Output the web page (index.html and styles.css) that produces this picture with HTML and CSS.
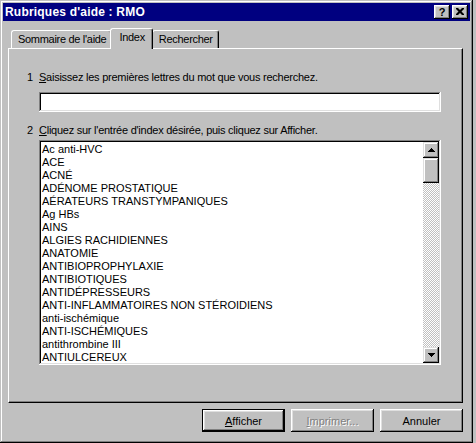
FILE: index.html
```html
<!DOCTYPE html>
<html lang="fr">
<head>
    <meta charset="UTF-8">
    <title>Rubriques d'aide : RMO</title>
    <link rel="stylesheet" href="styles.css">
</head>
<body>
    <div class="window">
        <div class="titlebar">
            <span class="title">Rubriques d'aide : RMO</span>
            <div class="caption-buttons">
                <button class="cap cap-help">?</button>
                <button class="cap">
                    <svg width="8" height="7" viewBox="0 0 8 7"><path d="M0 0h2l2 2 2-2h2v1l-2.5 2.5L8 6v1H6L4 5 2 7H0V6l2.5-2.5L0 1z" fill="#000"/></svg>
                </button>
            </div>
        </div>

        <div class="content">
            <div class="tabs">
                <div class="tab">Sommaire de l'aide</div>
                <div class="tab active">Index</div>
                <div class="tab">Rechercher</div>
            </div>

            <div class="panel">
                <div class="step"><span class="num">1</span><span><u>S</u>aisissez les premières lettres du mot que vous recherchez.</span></div>
                <div class="field"><input type="text" class="search"></div>

                <div class="step step-2"><span class="num">2</span><span><u>C</u>liquez sur l'entrée d'index désirée, puis cliquez sur Afficher.</span></div>
                <div class="field">
                    <div class="listbox">
                        <ul class="items">
                            <li>Ac anti-HVC</li>
                            <li>ACE</li>
                            <li>ACNÉ</li>
                            <li>ADÉNOME PROSTATIQUE</li>
                            <li>AÉRATEURS TRANSTYMPANIQUES</li>
                            <li>Ag HBs</li>
                            <li>AINS</li>
                            <li>ALGIES RACHIDIENNES</li>
                            <li>ANATOMIE</li>
                            <li>ANTIBIOPROPHYLAXIE</li>
                            <li>ANTIBIOTIQUES</li>
                            <li>ANTIDÉPRESSEURS</li>
                            <li>ANTI-INFLAMMATOIRES NON STÉROIDIENS</li>
                            <li>anti-ischémique</li>
                            <li>ANTI-ISCHÉMIQUES</li>
                            <li>antithrombine III</li>
                            <li>ANTIULCEREUX</li>
                        </ul>
                        <div class="scrollbar">
                            <div class="sb-btn">
                                <svg width="7" height="4" viewBox="0 0 7 4"><path d="M3 0h1v1h1v1h1v1h1v1H0V3h1V2h1V1h1z" fill="#000"/></svg>
                            </div>
                            <div class="sb-thumb"></div>
                            <div class="sb-track"></div>
                            <div class="sb-btn">
                                <svg width="7" height="4" viewBox="0 0 7 4"><path d="M0 0h7v1H6v1H5v1H4v1H3V3H2V2H1V1H0z" fill="#000"/></svg>
                            </div>
                        </div>
                    </div>
                </div>
            </div>

            <div class="actions">
                <button class="btn default"><u>A</u>fficher</button>
                <button class="btn disabled"><u>I</u>mprimer...</button>
                <button class="btn">Annuler</button>
            </div>
        </div>
    </div>
</body>
</html>
```

FILE: styles.css
```css
body {
    margin: 0;
    width: 476px;
    height: 443px;
    background-color: #c0c0c0;
    font-family: "Liberation Sans", Arial, sans-serif;
    font-size: 11px;
    color: #000;
    overflow: hidden;
}
.window {
    box-sizing: border-box;
    width: 473px;
    height: 443px;
    padding: 3px;
    background-color: #c0c0c0;
    box-shadow: inset -1px -1px #000, inset 1px 1px #c0c0c0, inset -2px -2px #808080, inset 2px 2px #fff;
    display: flex;
    flex-direction: column;
}
.titlebar {
    height: 18px;
    background-color: #000080;
    display: flex;
    align-items: center;
    justify-content: space-between;
    padding: 0 2px;
}
.title {
    color: #fff;
    font-weight: bold;
    font-size: 12px;
    letter-spacing: 0.2px;
}
.caption-buttons {
    display: flex;
    gap: 2px;
}
.cap {
    box-sizing: border-box;
    width: 16px;
    height: 14px;
    padding: 0;
    border: none;
    background-color: #c0c0c0;
    box-shadow: inset -1px -1px #000, inset 1px 1px #fff, inset -2px -2px #808080, inset 2px 2px #dfdfdf;
    display: flex;
    align-items: center;
    justify-content: center;
    font-family: "Liberation Sans", Arial, sans-serif;
    font-weight: bold;
    font-size: 11px;
    line-height: 1;
}
.cap svg {
    display: block;
    margin-top: -1px;
}
.content {
    flex: 1;
    display: flex;
    flex-direction: column;
    padding: 7px 7px 0 5px;
}
.tabs {
    display: flex;
    align-items: flex-end;
    height: 20px;
    padding-left: 3px;
    position: relative;
    z-index: 1;
}
.tab {
    box-sizing: border-box;
    height: 18px;
    line-height: 16px;
    padding: 0 5px 0 6px;
    border: 1px solid;
    border-color: #fff #000 transparent #fff;
    border-bottom: none;
    border-radius: 3px 3px 0 0;
    box-shadow: inset -1px 0 #808080;
    background-color: #c0c0c0;
    letter-spacing: -0.3px;
}
.tab.active {
    height: 21px;
    line-height: 17px;
    margin: 0 -2px -1px;
    padding: 0 7px 0 8px;
    position: relative;
}
.tab.active + .tab {
    margin-left: 1px;
}
.panel {
    box-sizing: border-box;
    height: 355px;
    padding: 22px 0 0 18px;
    border: 1px solid;
    border-color: #fff #000 #000 #fff;
    box-shadow: inset -1px -1px #808080;
}
.step {
    display: flex;
    line-height: 13px;
    height: 13px;
    letter-spacing: -0.25px;
}
.step-2 {
    margin-top: 12px;
}
.num {
    width: 12px;
}
.step u, .btn u {
    text-decoration: underline;
    text-underline-offset: 1px;
}
.field {
    margin-left: 12px;
}
.search {
    box-sizing: border-box;
    display: block;
    width: 402px;
    height: 20px;
    margin-top: 8px;
    padding: 0 2px;
    border: none;
    background-color: #fff;
    box-shadow: inset -1px -1px #fff, inset 1px 1px #808080, inset -2px -2px #dfdfdf, inset 2px 2px #000;
    outline: none;
}
.listbox {
    box-sizing: border-box;
    width: 402px;
    height: 225px;
    margin-top: 3px;
    padding: 2px;
    background-color: #fff;
    box-shadow: inset -1px -1px #fff, inset 1px 1px #808080, inset -2px -2px #dfdfdf, inset 2px 2px #000;
    display: flex;
}
.items {
    flex: 1;
    list-style-type: none;
    margin: 0;
    padding: 1px 0 0 1px;
    overflow: hidden;
}
.items li {
    height: 13px;
    line-height: 13px;
    white-space: nowrap;
}
.scrollbar {
    width: 16px;
    display: flex;
    flex-direction: column;
}
.sb-btn, .sb-thumb {
    box-sizing: border-box;
    width: 16px;
    height: 16px;
    background-color: #c0c0c0;
    box-shadow: inset -1px -1px #000, inset 1px 1px #dfdfdf, inset -2px -2px #808080, inset 2px 2px #fff;
    display: flex;
    align-items: center;
    justify-content: center;
}
.sb-thumb {
    height: 25px;
}
.sb-track {
    flex: 1;
    background: repeating-conic-gradient(#c0c0c0 0 25%, #fff 0 50%) 0 0 / 2px 2px;
}
.actions {
    display: flex;
    justify-content: flex-end;
    gap: 6px;
    margin-top: 6px;
}
.btn {
    box-sizing: border-box;
    width: 83px;
    height: 23px;
    padding: 0;
    border: none;
    background-color: #c0c0c0;
    box-shadow: inset -1px -1px #000, inset 1px 1px #fff, inset -2px -2px #808080, inset 2px 2px #dfdfdf;
    font-family: "Liberation Sans", Arial, sans-serif;
    font-size: 11px;
    color: #000;
}
.btn.default {
    box-shadow: inset 0 0 0 1px #000, inset -2px -2px #000, inset 2px 2px #fff, inset -3px -3px #808080, inset 3px 3px #dfdfdf;
}
.btn.disabled {
    color: #808080;
    text-shadow: 1px 1px #fff;
}
```
